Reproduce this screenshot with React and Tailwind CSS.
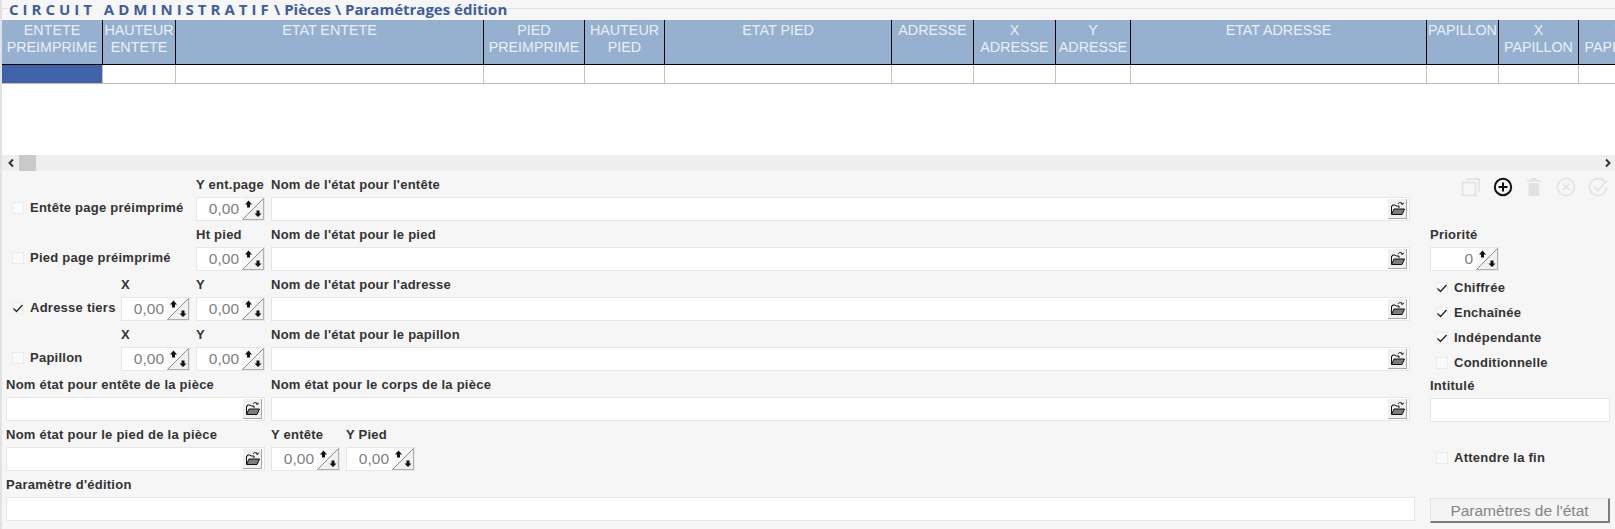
const columns = [
  { w: 101, l: ['ENTETE', 'PREIMPRIME'] },
  { w: 73, l: ['HAUTEUR', 'ENTETE'] },
  { w: 308, l: ['ETAT ENTETE'] },
  { w: 101, l: ['PIED', 'PREIMPRIME'] },
  { w: 80, l: ['HAUTEUR', 'PIED'] },
  { w: 227, l: ['ETAT PIED'] },
  { w: 82, l: ['ADRESSE'] },
  { w: 82, l: ['X', 'ADRESSE'] },
  { w: 75, l: ['Y', 'ADRESSE'] },
  { w: 296, l: ['ETAT ADRESSE'] },
  { w: 72, l: ['PAPILLON'] },
  { w: 80, l: ['X', 'PAPILLON'] },
  { w: 81, l: ['Y', 'PAPILLON'] },
];

const labelCls = "h-5 leading-[16px] text-[13px] tracking-[0.25px] font-bold text-[#333] whitespace-nowrap";

function Spinner() {
  return (
    <svg width="22" height="22" viewBox="0 0 22 22" className="shrink-0 bg-[#f8f8f8]">
      <path d="M0 22L22 0V22Z" fill="#f0f0f0" />
      <path d="M0 22L22 0" stroke="#8c8c8c" strokeWidth="1" />
      <path d="M0 21.5H22M21.5 0V22" stroke="#b0b0b0" strokeWidth="1" />
      <path d="M6.5 2.5L10 6.5H8V9.5H5V6.5H3Z" fill="#111" />
      <path d="M14.5 12.5H17.5V15.5H19.5L16 19L12.5 15.5H14.5Z" fill="#111" />
    </svg>
  );
}

function NumberBox({ value = '0,00' }) {
  return (
    <div className="flex h-6 w-[69px] items-center border border-[#e6e6e6] bg-white pr-0">
      <input readOnly value={value} className="h-full min-w-0 flex-1 bg-transparent pr-[3px] text-right text-[15.5px] text-[#808080] outline-none" />
      <Spinner />
    </div>
  );
}

function FolderIcon() {
  return (
    <div className="mr-[2px] flex h-5 w-[19px] shrink-0 items-center justify-center border-r border-b border-[#a8a8a8] bg-[#f0f0f0]">
      <svg width="15" height="15" viewBox="0 0 15 15">
        <path d="M1.5 13V5H2.5V4H5L6 5H9V7" fill="none" stroke="#111" strokeWidth="1" />
        <path d="M8 3C9 1.2 11.5 0.8 12.5 3M12.5 3.5L10.8 2.6M12.5 3.5L13.6 1.8" fill="none" stroke="#111" strokeWidth="1" />
        <path d="M1.5 13.5L4 8H14.5L12 13.5Z" fill="#7c7c7c" stroke="#111" strokeWidth="1" />
      </svg>
    </div>
  );
}

function TextBox({ folder, className = '' }) {
  return (
    <div className={"flex h-6 items-center border border-[#e6e6e6] bg-white " + className}>
      <input readOnly className="h-full min-w-0 flex-1 bg-transparent outline-none" />
      {folder && <FolderIcon />}
    </div>
  );
}

function Check({ checked, label, className = '' }) {
  return (
    <div className={"flex items-center " + className}>
      <div className="flex h-3 w-3 shrink-0 items-center justify-center border border-[#ececec] bg-[#fafafa]">
        {checked && (
          <svg width="12" height="12" viewBox="0 0 12 12" className="shrink-0">
            <path d="M1.5 6.5L4.5 9.5L10.5 3" fill="none" stroke="#222" strokeWidth="1.3" />
          </svg>
        )}
      </div>
      <span className="ml-[6px] text-[13px] tracking-[0.25px] font-bold leading-[14px] whitespace-nowrap text-[#333]">{label}</span>
    </div>
  );
}

function Col({ label, className = '', children }) {
  return (
    <div className={className}>
      <div className={labelCls}>{label}</div>
      {children}
    </div>
  );
}

function CheckCell({ checked, label, className }) {
  return (
    <div className={"pt-5 " + className}>
      <div className="flex h-[22px] items-center pl-[10px]">
        <Check checked={checked} label={label} />
      </div>
    </div>
  );
}

function Toolbar() {
  return (
    <div className="flex h-[20px] items-center pl-[31px]">
      <svg width="20" height="20" viewBox="0 0 20 20" className="shrink-0">
        <path d="M1.5 5.5H14.5V18.5H1.5Z" fill="none" stroke="#e2e2e2" strokeWidth="1.6" />
        <path d="M5 2H18V15" fill="none" stroke="#e2e2e2" strokeWidth="1.6" />
      </svg>
      <svg width="20" height="20" viewBox="0 0 20 20" className="ml-[12px] shrink-0">
        <circle cx="10" cy="10" r="8.2" fill="none" stroke="#111" strokeWidth="2" />
        <path d="M10 5.5V14.5M5.5 10H14.5" stroke="#111" strokeWidth="2" />
      </svg>
      <svg width="16" height="20" viewBox="0 0 16 20" className="ml-[13px] shrink-0">
        <path d="M1 3H15V4.5H1ZM5.5 1H10.5V3H5.5Z" fill="#e2e2e2" />
        <path d="M2.5 6H13.5V19H2.5Z" fill="#e2e2e2" />
      </svg>
      <svg width="20" height="20" viewBox="0 0 20 20" className="ml-[14px] shrink-0">
        <circle cx="10" cy="10" r="8.5" fill="none" stroke="#e2e2e2" strokeWidth="1.6" />
        <path d="M7 7L13 13M13 7L7 13" stroke="#e2e2e2" strokeWidth="1.6" />
      </svg>
      <svg width="20" height="20" viewBox="0 0 20 20" className="ml-[12px] shrink-0">
        <path d="M16.5 4.5A8.5 8.5 0 1 0 18.5 10" fill="none" stroke="#e2e2e2" strokeWidth="1.6" />
        <path d="M6 9.5L10 13.5L19 3.5" fill="none" stroke="#e2e2e2" strokeWidth="1.6" />
      </svg>
    </div>
  );
}

export default function App() {
  return (
    <div className="h-[529px] w-full overflow-hidden border-l-2 border-[#e2e2e2] bg-[#f6f6f6] font-['Liberation_Sans',Arial,sans-serif]">
      {/* titre */}
      <div className="flex h-5 items-center pb-[3px]">
        <div className="h-px w-[7px] bg-[#e2e2e2]" />
        <h1 className="font-['Open_Sans',sans-serif] text-[15px] font-bold leading-[18px] whitespace-nowrap text-[#3d5e9e]">
          <span className="tracking-[4px]">CIRCUIT ADMINISTRATIF</span><span className="ml-[-2.5px]"> \ Pièces \ Paramétrages édition</span>
        </h1>
        <div className="h-px flex-1 bg-[#e2e2e2]" />
      </div>

      {/* grille */}
      <div className="h-[135px] overflow-hidden bg-white">
        <div className="flex h-[45px] w-max border-b border-black bg-[#96b0cf]">
          {columns.map((c, i) => (
            <div key={i} style={{ width: c.w }} className="flex shrink-0 flex-col items-center overflow-hidden border-r border-black pt-[2px] text-[14.3px] leading-[17px] whitespace-nowrap text-[#e9eff7]">
              {c.l.map(t => <span key={t}>{t}</span>)}
            </div>
          ))}
        </div>
        <div className="flex h-[19px] w-max border-b border-[#bdbdbd]">
          {columns.map((c, i) => (
            <div key={i} style={{ width: c.w }} className={"shrink-0 border-r border-[#c4c4c4] " + (i === 0 ? "bg-[#3e63a9]" : "bg-white")} />
          ))}
        </div>
      </div>

      {/* ascenseur */}
      <div className="flex h-4 items-center justify-between bg-[#eeeeee] pr-[3px] pl-[5px]">
        <div className="flex items-center">
          <svg width="8" height="10" viewBox="0 0 8 10"><path d="M6 1.5L2.5 5L6 8.5" fill="none" stroke="#333" strokeWidth="2" /></svg>
          <div className="ml-[4px] h-4 w-[17px] bg-[#c9c9c9]" />
        </div>
        <svg width="8" height="10" viewBox="0 0 8 10"><path d="M2 1.5L5.5 5L2 8.5" fill="none" stroke="#333" strokeWidth="2" /></svg>
      </div>

      {/* formulaire */}
      <div className="flex pt-[6px]">
        <div className="w-[1413px] shrink-0">
          <div className="flex h-[50px]">
            <CheckCell label="Entête page préimprimé" className="w-[194px]" />
            <Col label="Y ent.page" className="w-[69px]"><NumberBox /></Col>
            <Col label="Nom de l'état pour l'entête" className="ml-[6px] w-[1139px]"><TextBox folder /></Col>
          </div>
          <div className="flex h-[50px]">
            <CheckCell label="Pied page préimprimé" className="w-[194px]" />
            <Col label="Ht pied" className="w-[69px]"><NumberBox /></Col>
            <Col label="Nom de l'état pour le pied" className="ml-[6px] w-[1139px]"><TextBox folder /></Col>
          </div>
          <div className="flex h-[50px]">
            <CheckCell checked label="Adresse tiers" className="w-[119px]" />
            <Col label="X" className="w-[69px]"><NumberBox /></Col>
            <Col label="Y" className="ml-[6px] w-[69px]"><NumberBox /></Col>
            <Col label="Nom de l'état pour l'adresse" className="ml-[6px] w-[1139px]"><TextBox folder /></Col>
          </div>
          <div className="flex h-[50px]">
            <CheckCell label="Papillon" className="w-[119px]" />
            <Col label="X" className="w-[69px]"><NumberBox /></Col>
            <Col label="Y" className="ml-[6px] w-[69px]"><NumberBox /></Col>
            <Col label="Nom de l'état pour le papillon" className="ml-[6px] w-[1139px]"><TextBox folder /></Col>
          </div>
          <div className="flex h-[50px] pl-[4px]">
            <Col label="Nom état pour entête de la pièce" className="w-[259px]"><TextBox folder /></Col>
            <Col label="Nom état pour le corps de la pièce" className="ml-[6px] w-[1139px]"><TextBox folder /></Col>
          </div>
          <div className="flex h-[50px] pl-[4px]">
            <Col label="Nom état pour le pied de la pièce" className="w-[259px]"><TextBox folder /></Col>
            <Col label="Y entête" className="ml-[6px] w-[69px]"><NumberBox /></Col>
            <Col label="Y Pied" className="ml-[6px] w-[69px]"><NumberBox /></Col>
          </div>
          <div className="pl-[4px]">
            <Col label="Paramètre d'édition"><TextBox /></Col>
          </div>
        </div>

        <div className="ml-[15px] w-[180px] shrink-0">
          <Toolbar />
          <div className="mt-[30px]">
            <Col label="Priorité"><NumberBox value="0" /></Col>
          </div>
          <div className="mt-[4px] flex flex-col pl-[6px]">
            <Check checked label="Chiffrée" className="h-[25px]" />
            <Check checked label="Enchaînée" className="h-[25px]" />
            <Check checked label="Indépendante" className="h-[25px]" />
            <Check label="Conditionnelle" className="h-[25px]" />
          </div>
          <div className="mt-[3px]">
            <Col label="Intitulé"><TextBox /></Col>
          </div>
          <Check label="Attendre la fin" className="mt-[23px] h-[25px] pl-[6px]" />
          <button className="mt-[28px] h-[25px] w-[180px] border border-[#e4e4e4] border-r-2 border-b-2 border-r-[#7d7d7d] border-b-[#7d7d7d] bg-[#f4f4f4] text-[15.5px] text-[#858585]">
            Paramètres de l'état
          </button>
        </div>
      </div>
    </div>
  );
}
